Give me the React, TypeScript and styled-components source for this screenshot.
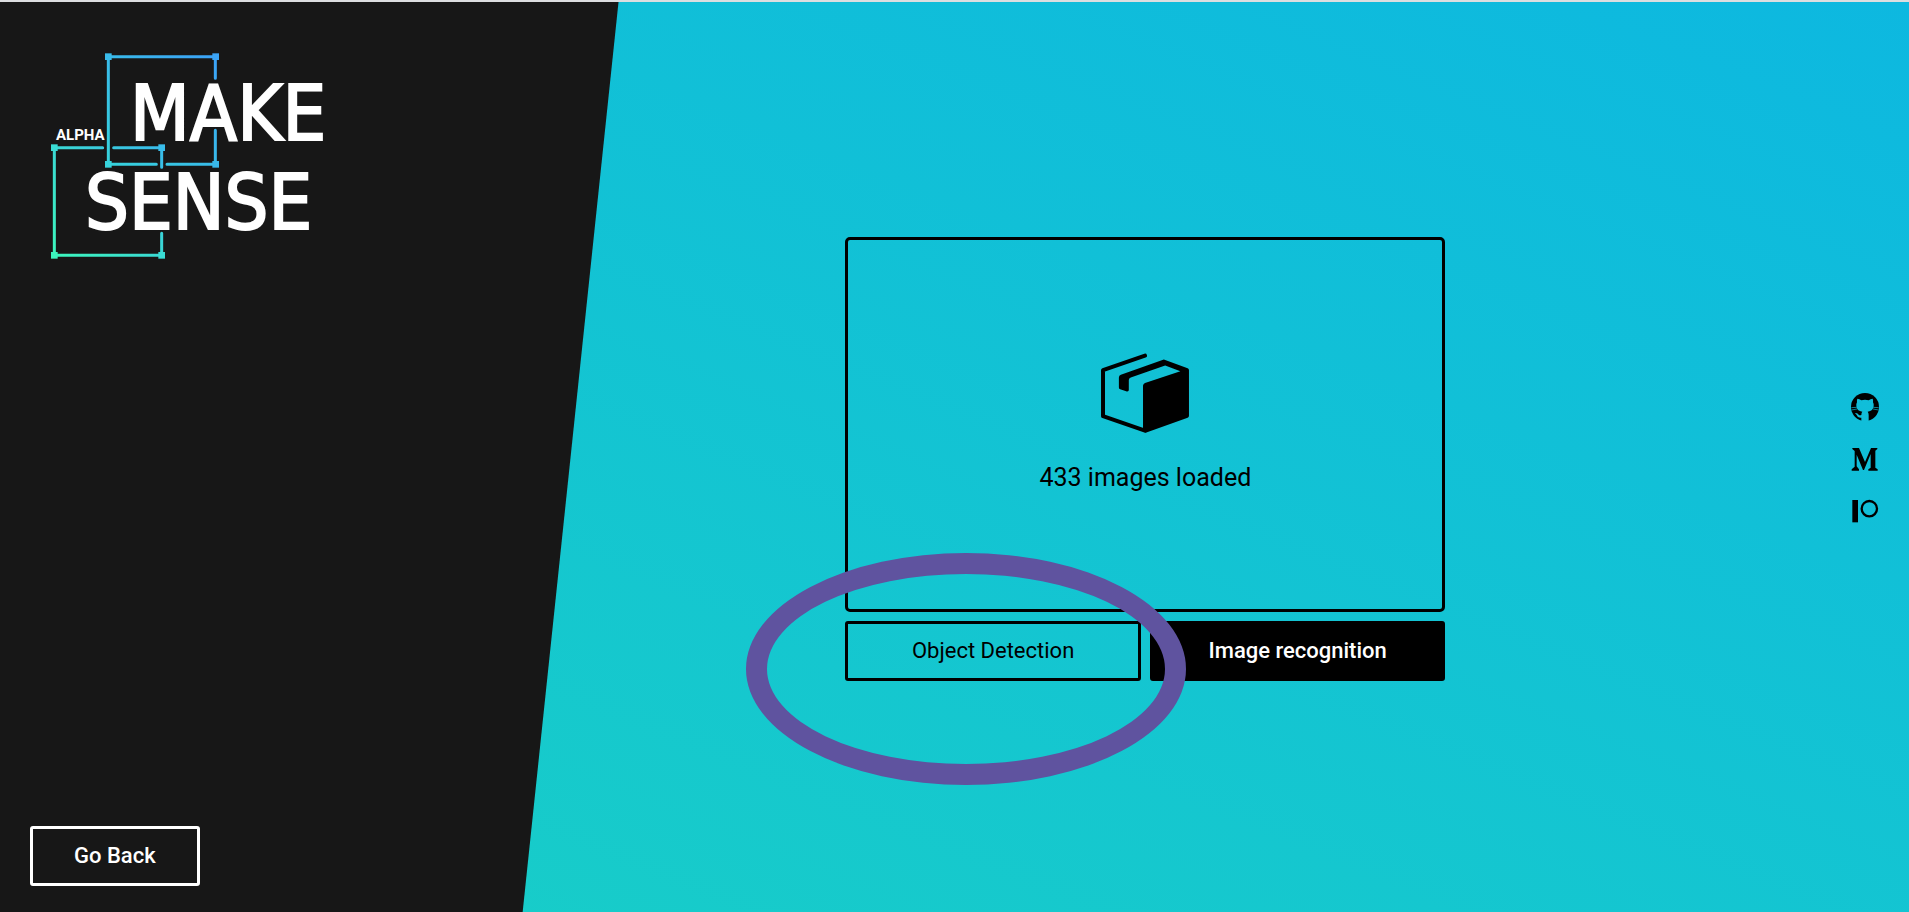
import React from "react";
import styled, { createGlobalStyle, css } from "styled-components";

const GlobalStyle = createGlobalStyle`
  *, *::before { box-sizing: border-box; }
  body {
    margin: 0;
    font-family: Roboto, "Liberation Sans", sans-serif;
    color: #000;
  }
`;

const Page = styled.div`
  position: relative;
  display: grid;
  grid-template-columns: 20% 1fr;
  min-height: 100vh;
  border-top: 2px solid #dcdee0;
  background: linear-gradient(22deg, #19cfc6, #0db8e0);
  overflow: hidden;

  &::before {
    content: "";
    position: absolute;
    inset: 0 auto 0 0;
    width: 32.4%;
    background: #171717;
    clip-path: polygon(0 0, 100% 0, 84.5% 100%, 0 100%);
  }
`;

const Sidebar = styled.aside`
  position: relative;
  display: flex;
  flex-direction: column;
  justify-content: space-between;
  align-items: flex-start;
  padding: 28px 30px 26px;
`;

const Logo = styled.svg`
  display: block;
  flex: none;
  fill: #fff;
  overflow: visible;
`;

const LogoWord = styled.text`
  font-family: "DejaVu Sans Condensed", "DejaVu Sans", sans-serif;
  font-stretch: condensed;
  font-size: 77px;
  stroke: #fff;
  stroke-width: 2px;
`;

const LogoTag = styled.text`
  font-size: 15px;
  font-weight: 700;
`;

const Button = styled.button<{ $tone: "light" | "outline" | "solid" }>`
  height: 60px;
  padding: 0 41px;
  border: 3px solid #000;
  border-radius: 3px;
  background: transparent;
  color: #000;
  font: 400 22px/30px Roboto, "Liberation Sans", sans-serif;
  white-space: nowrap;
  cursor: pointer;

  ${({ $tone }) =>
    $tone === "light" &&
    css`
      border-color: #fff;
      color: #fff;
      font-weight: 500;
    `}
  ${({ $tone }) =>
    $tone === "solid" &&
    css`
      background: #000;
      color: #fff;
      font-weight: 500;
    `}
`;

const Main = styled.main`
  position: relative;
  display: grid;
  align-items: center;
  padding-top: 4px;
`;

const Loader = styled.section`
  position: relative;
  grid-area: 1 / 1;
  justify-self: center;
  display: grid;
  grid-template-columns: 1fr 1fr;
  gap: 9px;
  width: 600px;
`;

const DropZone = styled.div`
  grid-column: 1 / -1;
  display: flex;
  flex-direction: column;
  align-items: center;
  justify-content: center;
  gap: 27px;
  height: 375px;
  border: 3px solid #000;
  border-radius: 5px;
`;

const Message = styled.p`
  margin: 0;
  font-size: 25px;
  line-height: 36px;
`;

const Highlight = styled.div`
  position: absolute;
  left: -99px;
  top: 316px;
  width: 440px;
  height: 232px;
  border: 21px solid #5f539f;
  border-radius: 50%;
  pointer-events: none;
`;

const Social = styled.nav`
  grid-area: 1 / 1;
  justify-self: end;
  display: flex;
  flex-direction: column;
  gap: 24px;
  padding-right: 30px;
`;

const SocialLink = styled.a`
  display: block;
  width: 28px;
  height: 28px;
  color: #000;

  svg {
    display: block;
    width: 28px;
    height: 28px;
    fill: currentColor;
  }
`;

const corners = (x: number, y: number, fills: string[]) =>
  [[x, y], [x + 322, y], [x + 322, y + 323], [x, y + 323]].map(([cx, cy], i) => (
    <rect key={i} x={cx - 10} y={cy - 10} width="20" height="20" fill={fills[i]} />
  ));

const MakeSenseLogo = () => (
  <Logo width="320" height="240" role="img" aria-label="Make Sense alpha">
    <svg width="320" height="240" viewBox="0 0 960 720">
      <defs>
        <linearGradient id="blue" gradientUnits="userSpaceOnUse" x1="235" y1="403" x2="556" y2="80">
          <stop offset="0" stopColor="#36d3dc" />
          <stop offset="1" stopColor="#3ba2f7" />
        </linearGradient>
        <linearGradient id="green" gradientUnits="userSpaceOnUse" x1="73" y1="676" x2="395" y2="353">
          <stop offset="0" stopColor="#3cf6bd" />
          <stop offset="1" stopColor="#38bbea" />
        </linearGradient>
      </defs>
      <g fill="none" strokeWidth="9" strokeLinecap="round">
        <path stroke="url(#blue)" d="M556 145V80H235V403H379M411 403H556V301" />
        <path stroke="url(#green)" d="M218 353H73V676H395V610M251 353H395V412" />
      </g>
      {corners(235, 80, ["#39bbea", "#3ba4f6", "#39b8ea", "#37d3dc"])}
      {corners(73, 353, ["#3adcd4", "#39bdea", "#3adcd4", "#3cf4be"])}
    </svg>
    <LogoTag x="26" y="110">ALPHA</LogoTag>
    <LogoWord x="100" y="110">MAKE</LogoWord>
    <LogoWord x="55" y="199">SENSE</LogoWord>
  </Logo>
);

const BoxIcon = () => (
  <svg width="90" height="80" viewBox="60 40 270 242" aria-hidden="true">
    <path
      d="M195 48L68 92V231L195 275"
      fill="none"
      stroke="#000"
      strokeWidth="12"
      strokeLinecap="round"
      strokeLinejoin="round"
    />
    <path d="M116 114Q116 108 122 106L252 60L324 86Q328 88 328 92V230Q328 234 324 236L197 281L189 272V138Q190 133 195 131L302 95L256 78L152 114Q146 116 146 122V152Q146 158 138 156L120 150Q116 148 116 144Z" />
  </svg>
);

const App = () => (
  <>
    <GlobalStyle />
    <Page>
      <Sidebar>
        <MakeSenseLogo />
        <Button $tone="light">Go Back</Button>
      </Sidebar>
      <Main>
        <Loader>
          <DropZone>
            <BoxIcon />
            <Message>433 images loaded</Message>
          </DropZone>
          <Button $tone="outline">Object Detection</Button>
          <Button $tone="solid">Image recognition</Button>
          <Highlight />
        </Loader>
        <Social aria-label="Social links">
          <SocialLink href="#github" aria-label="GitHub">
            <svg viewBox="0 0 84 84">
              <mask id="cat">
                <rect width="84" height="84" fill="#fff" />
                <path
                  d="M19 17Q25 17 31 22Q42 19 53 22Q59 17 65 17Q67 22 66 28Q69 33 68 40Q67 54 50 56Q53 60 53 66V84H31V74Q20 76 17 66L12 60Q20 59 23 65Q26 68 31 66Q31 59 34 56Q17 54 16 40Q15 33 18 28Q17 22 19 17Z"
                  fill="#000"
                />
                <path d="M1 44L17 43M1 51L18 48M83 44L67 43M83 51L66 48" stroke="#000" strokeWidth="2" />
              </mask>
              <circle cx="42" cy="42" r="42" mask="url(#cat)" />
            </svg>
          </SocialLink>
          <SocialLink href="#medium" aria-label="Medium">
            <svg viewBox="0 0 84 84">
              <path d="M4 9H24L42 51L60 9H79V12L73 17V68L80 73V77H52V73L59 68V27L39 75H36L17 29V64L24 73V77H2V73L11 65V18L4 12Z" />
            </svg>
          </SocialLink>
          <SocialLink href="#patreon" aria-label="Patreon">
            <svg viewBox="0 0 84 84">
              <rect x="4" y="9" width="17" height="67" />
              <circle cx="55" cy="35" r="23" fill="none" stroke="#000" strokeWidth="7" />
            </svg>
          </SocialLink>
        </Social>
      </Main>
    </Page>
  </>
);

export default App;
